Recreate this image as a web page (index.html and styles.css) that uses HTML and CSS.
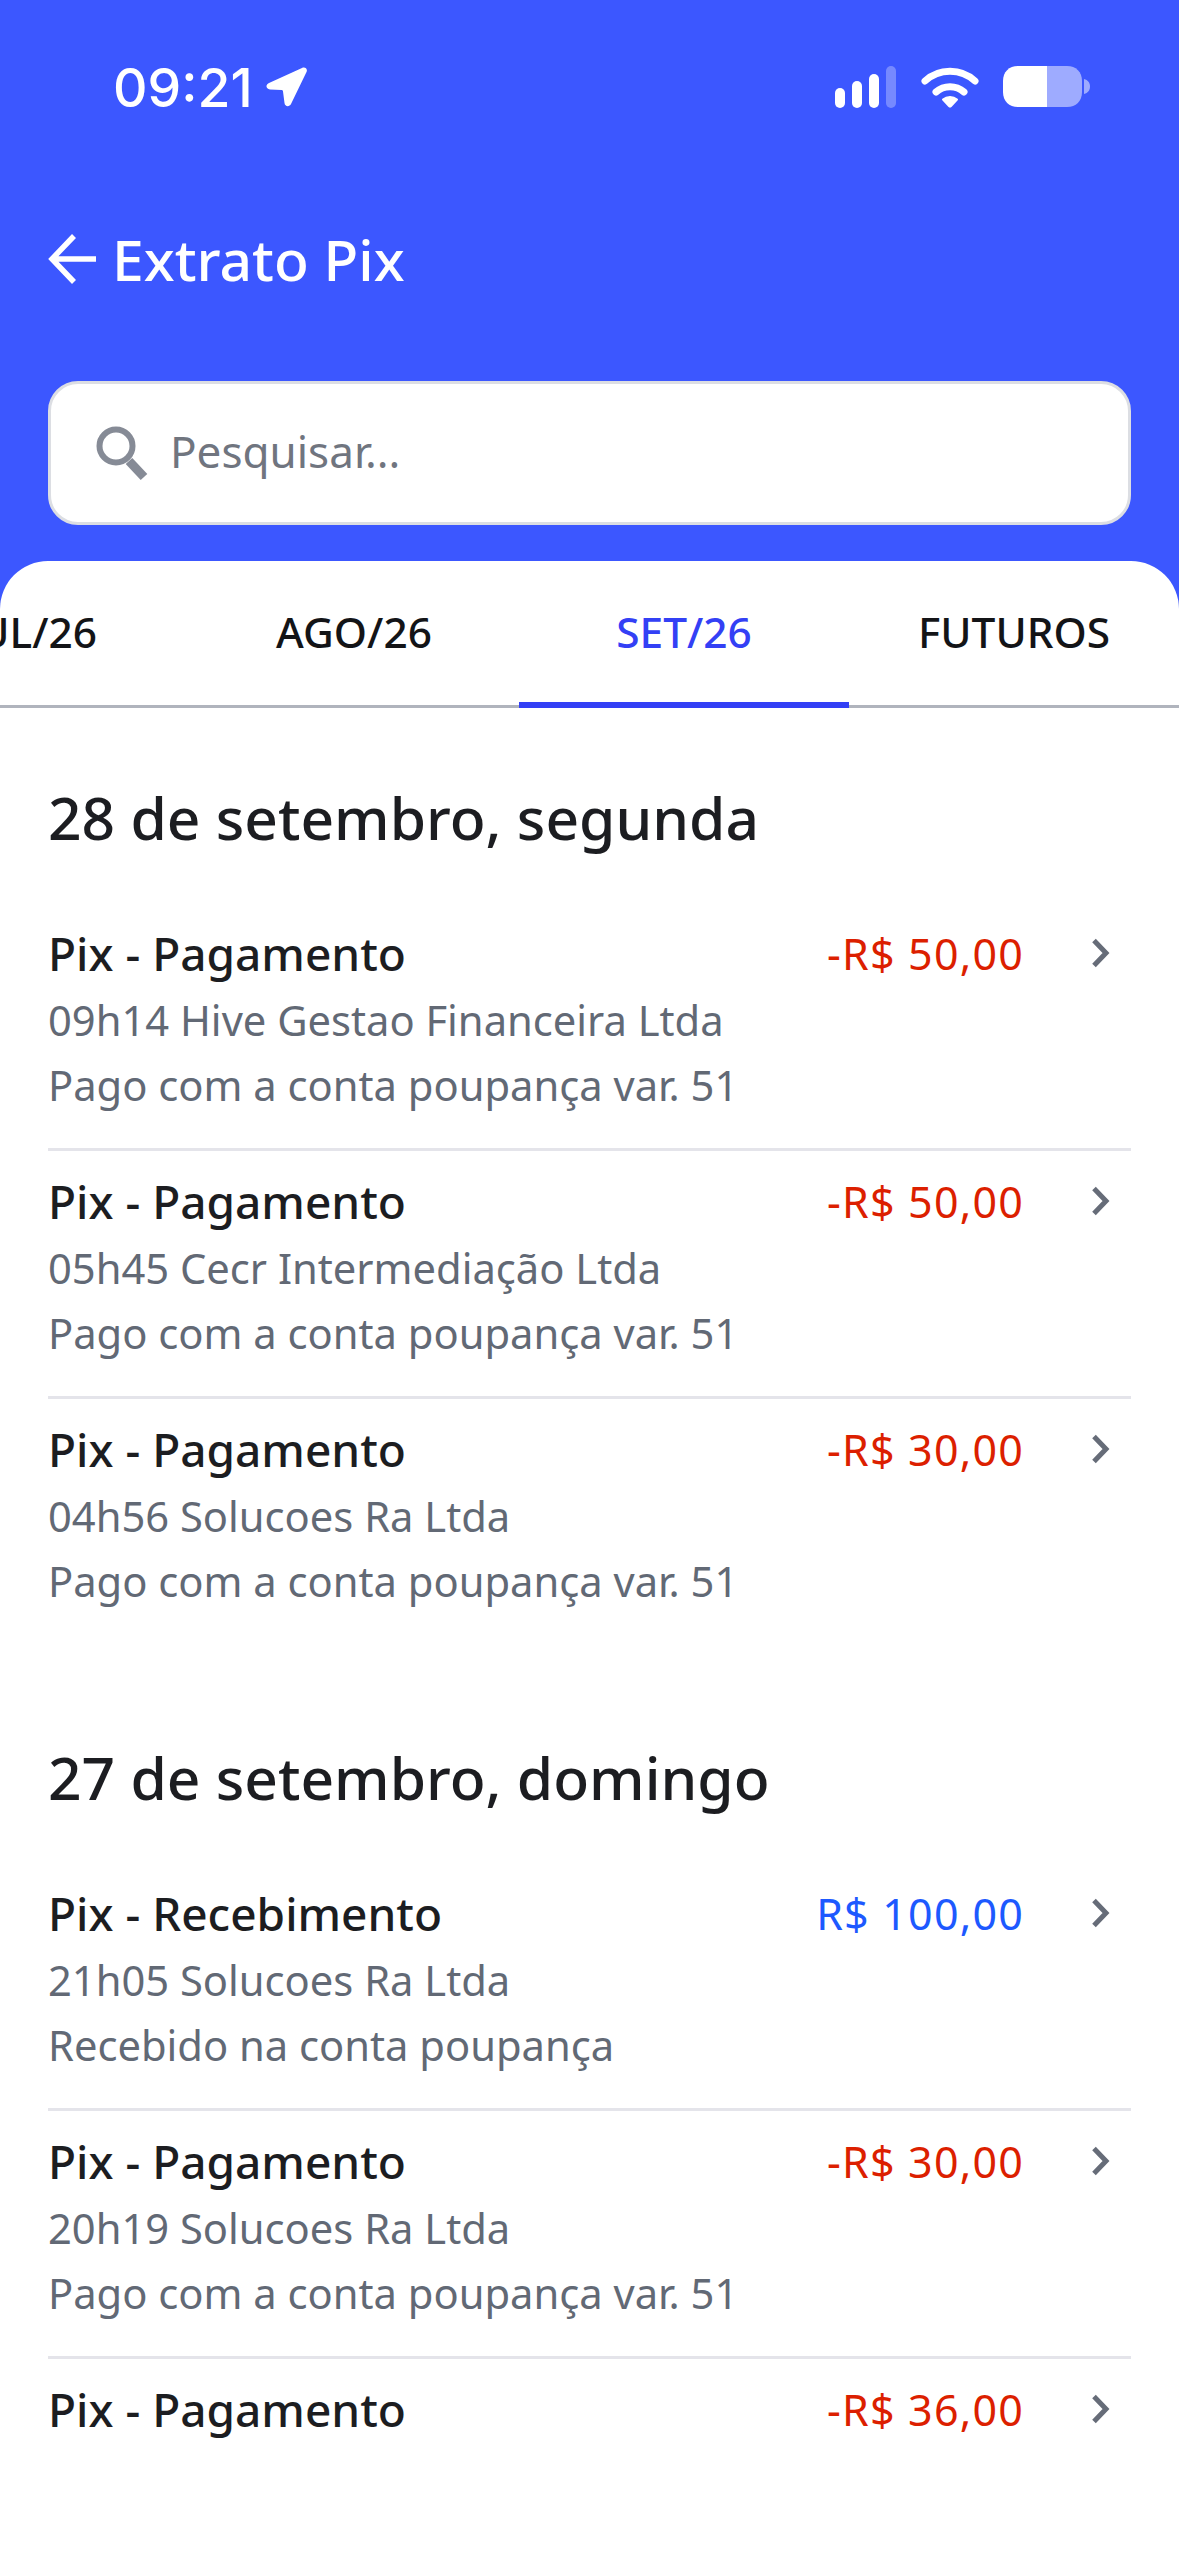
FILE: index.html
```html
<!DOCTYPE html>
<html lang="pt-BR">
<head>
    <meta charset="UTF-8">
    <meta name="viewport" content="width=device-width, initial-scale=1.0">
    <title>Extrato Pix</title>
    <link rel="stylesheet" href="styles.css">
</head>
<body>
    <header class="header">
        <div class="status-bar">
            <div class="status-left">
                <span class="clock">09:21</span>
                <svg class="location" width="42" height="42" viewBox="0 0 42 42"><path d="M3 17 36 2c3-1.500 6 1 4.500 4L25 38c-1.500 3-6 3-6.500-1L17 25.500c-.1-1-.6-1.500-1.500-1.500L4 23.500c-4-.5-5-4.500-1-6.500Z" fill="#fff"/></svg>
            </div>
            <div class="status-right">
                <svg width="62" height="42" viewBox="0 0 62 42">
                    <rect x="0" y="22" width="10" height="20" rx="5" fill="#fff"/>
                    <rect x="17" y="15" width="10" height="27" rx="5" fill="#fff"/>
                    <rect x="34" y="8" width="10" height="34" rx="5" fill="#fff"/>
                    <rect x="51" y="0" width="10" height="42" rx="5" fill="#fff" opacity="0.3"/>
                </svg>
                <svg width="58" height="44" viewBox="0 0 58 44">
                    <path d="M4 16C18 3 40 3 54 16" fill="none" stroke="#fff" stroke-width="7" stroke-linecap="round"/>
                    <path d="M15 27C23 20 35 20 43 27" fill="none" stroke="#fff" stroke-width="7" stroke-linecap="round"/>
                    <path d="M22 34.500C26 31 32 31 36 34.500L30 41c-.6.600-1.400.600-2 0Z" fill="#fff" stroke="#fff" stroke-width="2" stroke-linejoin="round"/>
                </svg>
                <svg width="88" height="42" viewBox="0 0 88 42">
                    <path d="M15 0H44V41H15C6 41 0 35 0 26V15C0 6 6 0 15 0Z" fill="#fff"/>
                    <path d="M44 0H64C73 0 79 6 79 15V26C79 35 73 41 64 41H44Z" fill="#fff" opacity="0.5"/>
                    <path d="M81 13C85 14 87 17 87 20.500S85 27 81 28Z" fill="#fff" opacity="0.5"/>
                </svg>
            </div>
        </div>

        <div class="title-row">
            <svg width="50" height="50" viewBox="0 0 50 50"><path d="M26 2 4 25l22 23M5 25h43" fill="none" stroke="#fff" stroke-width="5.500"/></svg>
            <h1 class="title">Extrato Pix</h1>
        </div>

        <div class="search-box">
            <svg width="56" height="56" viewBox="0 0 56 56">
                <circle cx="21" cy="21" r="16.500" fill="none" stroke="#868b96" stroke-width="6"/>
                <path d="M34 36 49 52" stroke="#868b96" stroke-width="9"/>
            </svg>
            <span class="search-text">Pesquisar...</span>
        </div>
    </header>

    <main class="sheet">
        <nav class="tabs">
            <span class="tab tab-cut">JUL/26</span>
            <span class="tab">AGO/26</span>
            <span class="tab tab-active">SET/26</span>
            <span class="tab">FUTUROS</span>
        </nav>

        <section class="day">
            <h2 class="day-title">28 de setembro, segunda</h2>
            <div class="item">
                <div class="item-text">
                    <div class="item-name">Pix - Pagamento</div>
                    <div class="item-sub">09h14 Hive Gestao Financeira Ltda</div>
                    <div class="item-sub">Pago com a conta poupança var. 51</div>
                </div>
                <div class="item-value out">-R$ 50,00</div>
                <svg class="chevron" width="22" height="32" viewBox="0 0 22 32"><path d="M4 3.500 16 16 4 28.500" fill="none" stroke="#666c78" stroke-width="5"/></svg>
            </div>
            <div class="item">
                <div class="item-text">
                    <div class="item-name">Pix - Pagamento</div>
                    <div class="item-sub">05h45 Cecr Intermediação Ltda</div>
                    <div class="item-sub">Pago com a conta poupança var. 51</div>
                </div>
                <div class="item-value out">-R$ 50,00</div>
                <svg class="chevron" width="22" height="32" viewBox="0 0 22 32"><path d="M4 3.500 16 16 4 28.500" fill="none" stroke="#666c78" stroke-width="5"/></svg>
            </div>
            <div class="item">
                <div class="item-text">
                    <div class="item-name">Pix - Pagamento</div>
                    <div class="item-sub">04h56 Solucoes Ra Ltda</div>
                    <div class="item-sub">Pago com a conta poupança var. 51</div>
                </div>
                <div class="item-value out">-R$ 30,00</div>
                <svg class="chevron" width="22" height="32" viewBox="0 0 22 32"><path d="M4 3.500 16 16 4 28.500" fill="none" stroke="#666c78" stroke-width="5"/></svg>
            </div>
        </section>

        <section class="day">
            <h2 class="day-title">27 de setembro, domingo</h2>
            <div class="item">
                <div class="item-text">
                    <div class="item-name">Pix - Recebimento</div>
                    <div class="item-sub">21h05 Solucoes Ra Ltda</div>
                    <div class="item-sub">Recebido na conta poupança</div>
                </div>
                <div class="item-value in">R$ 100,00</div>
                <svg class="chevron" width="22" height="32" viewBox="0 0 22 32"><path d="M4 3.500 16 16 4 28.500" fill="none" stroke="#666c78" stroke-width="5"/></svg>
            </div>
            <div class="item">
                <div class="item-text">
                    <div class="item-name">Pix - Pagamento</div>
                    <div class="item-sub">20h19 Solucoes Ra Ltda</div>
                    <div class="item-sub">Pago com a conta poupança var. 51</div>
                </div>
                <div class="item-value out">-R$ 30,00</div>
                <svg class="chevron" width="22" height="32" viewBox="0 0 22 32"><path d="M4 3.500 16 16 4 28.500" fill="none" stroke="#666c78" stroke-width="5"/></svg>
            </div>
            <div class="item">
                <div class="item-text">
                    <div class="item-name">Pix - Pagamento</div>
                </div>
                <div class="item-value out">-R$ 36,00</div>
                <svg class="chevron" width="22" height="32" viewBox="0 0 22 32"><path d="M4 3.500 16 16 4 28.500" fill="none" stroke="#666c78" stroke-width="5"/></svg>
            </div>
        </section>
    </main>
</body>
</html>
```

FILE: styles.css
```css
body {
    font-family: 'Noto Sans', sans-serif;
    margin: 0;
    padding: 0;
    background-color: #ffffff;
    color: #1c1d21;
    height: 2556px;
    overflow: hidden;
}
.header {
    background-color: #3c57ff;
    height: 609px;
    padding: 0 48px;
    box-sizing: border-box;
}
.status-bar {
    display: flex;
    justify-content: space-between;
    align-items: center;
    height: 64px;
    padding: 55px 40px 0 65px;
}
.status-left {
    display: flex;
    align-items: center;
    gap: 13px;
}
.clock {
    font-family: 'Inter', sans-serif;
    font-size: 53.5px;
    font-weight: 500;
    color: white;
}
.status-right {
    display: flex;
    align-items: center;
    gap: 24px;
}
.title-row {
    display: flex;
    align-items: center;
    gap: 14px;
    margin-top: 112px;
    height: 56px;
}
.title {
    margin: 0;
    font-size: 57px;
    font-weight: 550;
    color: white;
}
.search-box {
    display: flex;
    align-items: center;
    gap: 19px;
    height: 144px;
    margin-top: 94px;
    padding: 0 44px;
    box-sizing: border-box;
    background-color: white;
    border: 3px solid #dcdee3;
    border-radius: 30px;
}
.search-text {
    font-size: 44px;
    line-height: 56px;
    padding-bottom: 5px;
    color: #70757f;
}
.sheet {
    margin-top: -48px;
    background-color: white;
    border-radius: 48px 48px 0 0;
    position: relative;
}
.tabs {
    display: flex;
    height: 147px;
    box-shadow: inset 0 -3px 0 #b0b4bd;
    border-radius: 48px 48px 0 0;
    overflow: hidden;
}
.tab {
    display: flex;
    flex: none;
    align-items: center;
    justify-content: center;
    box-sizing: border-box;
    width: 330px;
    padding-bottom: 7px;
    font-size: 42.4px;
    font-weight: 550;
    color: #131417;
}
.tab-cut {
    margin-left: -141px;
    justify-content: flex-end;
    padding-right: 92px;
}
.tab-active {
    color: #3340f5;
    border-bottom: 6px solid #3340f5;
    padding-bottom: 1px;
}
.day {
    padding: 0 48px;
}
.day + .day {
    margin-top: 24px;
}
.day-title {
    margin: 0;
    padding: 72px 0 49px;
    font-size: 58.7px;
    font-weight: 550;
    line-height: 74px;
}
.item {
    display: flex;
    align-items: flex-start;
    padding: 17px 0 31px;
    border-bottom: 3px solid #e4e4ea;
}
.item:last-child {
    border-bottom: none;
}
.item-text {
    flex: 1;
}
.item-name {
    font-size: 46px;
    font-weight: 550;
    line-height: 67px;
}
.item-sub {
    font-size: 41.7px;
    line-height: 65px;
    color: #626975;
}
.item-value {
    font-size: 43px;
    letter-spacing: 1.2px;
    line-height: 66px;
    margin-top: 1px;
}
.out {
    color: #dc1f00;
}
.in {
    color: #1d59ff;
}
.chevron {
    margin: 17px 19px 0 66px;
}
```
